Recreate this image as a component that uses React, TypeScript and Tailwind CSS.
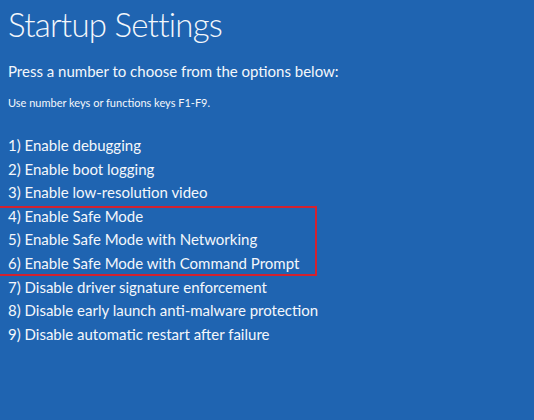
import React from "react";

const items = [
  "1) Enable debugging",
  "2) Enable boot logging",
  "3) Enable low-resolution video",
  "4) Enable Safe Mode",
  "5) Enable Safe Mode with Networking",
  "6) Enable Safe Mode with Command Prompt",
  "7) Disable driver signature enforcement",
  "8) Disable early launch anti-malware protection",
  "9) Disable automatic restart after failure",
];

export default function App() {
  return (
    <div
      className="w-[534px] h-[420px] overflow-hidden bg-[#1f64b1] text-[#f4f7fb] pl-[8px]"
      style={{ fontFamily: 'Lato, "Open Sans", sans-serif' }}
    >
      <h1 className="text-[33px] leading-[40px] pt-[4px] font-light tracking-[-0.75px]">Startup Settings</h1>
      <p className="text-[15px] leading-[20px] mt-[17px]">Press a number to choose from the options below:</p>
      <p className="text-[11px] leading-[16px] mt-[14px]">Use number keys or functions keys F1-F9.</p>
      <div className="relative mt-[23px]">
        <ul className="flex flex-col">
          {items.map((t) => (
            <li key={t} className="text-[15px] leading-[23.6px]">
              {t}
            </li>
          ))}
        </ul>
        <div className="absolute left-[-20px] top-[72px] w-[329px] h-[70px] border-2 border-[#d3222f]" />
      </div>
    </div>
  );
}
